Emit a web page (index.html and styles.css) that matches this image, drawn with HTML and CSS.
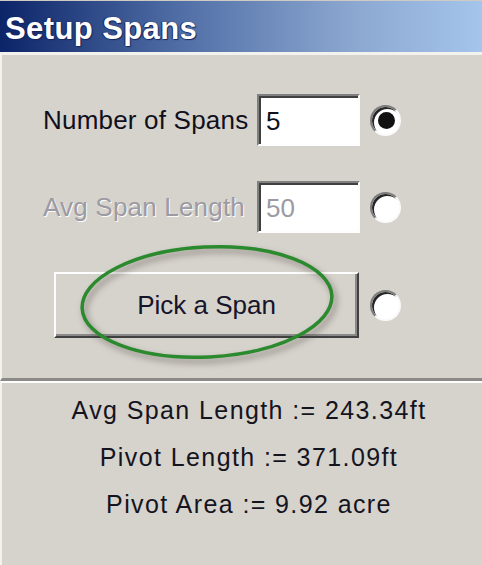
FILE: index.html
```html
<!DOCTYPE html>
<html lang="en">
<head>
    <meta charset="UTF-8">
    <meta name="viewport" content="width=device-width, initial-scale=1.0">
    <title>Setup Spans</title>
    <link rel="stylesheet" href="styles.css">
</head>
<body>
    <div class="window">
        <div class="title-bar">Setup Spans</div>

        <div class="setup-panel">
            <div class="row">
                <label class="row-label" for="spanCount">Number of Spans</label>
                <input class="field" type="text" id="spanCount" value="5">
                <span class="radio checked"></span>
            </div>
            <div class="row">
                <label class="row-label disabled" for="spanLength">Avg Span Length</label>
                <input class="field" type="text" id="spanLength" value="50" disabled>
                <span class="radio"></span>
            </div>
            <div class="row pick-row">
                <button class="pick-button">Pick a Span</button>
                <span class="radio"></span>
                <!-- highlight ring drawn over the button -->
                <svg class="highlight" width="270" height="130" viewBox="0 0 270 130">
                    <ellipse cx="135" cy="65" rx="125" ry="55" transform="rotate(-3 135 65)"
                             fill="none" stroke="#2b8a2e" stroke-width="3.5"/>
                </svg>
            </div>
        </div>

        <div class="result-panel">
            <p>Avg Span Length := 243.34ft</p>
            <p>Pivot Length := 371.09ft</p>
            <p>Pivot Area := 9.92 acre</p>
        </div>
    </div>
</body>
</html>
```

FILE: styles.css
```css
body {
    margin: 0;
    overflow: hidden;
    background-color: #d6d2cc;
    font-family: 'Liberation Sans', Arial, sans-serif;
}

.window {
    width: 496px;
    height: 565px;
    display: flex;
    flex-direction: column;
}

.title-bar {
    box-sizing: border-box;
    height: 52px;
    padding: 4px 0 0 5px;
    line-height: 48px;
    border-top: 1px solid #cfcbc4;
    background: linear-gradient(to right, #0c2468 0%, #4e6ca4 35%, #8aa6cf 70%, #a8c8ee 100%);
    color: #fff;
    font-size: 31px;
    font-weight: bold;
    letter-spacing: 0.4px;
    text-shadow: 1px 1px 1px #14245a, -1px 0 1px #14245a;
}

.setup-panel {
    padding: 39px 0 40px 41px;
    border-top: 3px solid #f3f2ef;
    border-left: 2px solid #f3f2ef;
    border-bottom: 3px solid #8c8a86;
}

.row {
    display: flex;
    align-items: center;
    margin-bottom: 35px;
}

.row:nth-child(2) {
    margin-bottom: 39px;
}

.row-label {
    width: 204px;
    margin-right: 10px;
    font-size: 26px;
    color: #10101c;
    letter-spacing: 0.2px;
    white-space: nowrap;
}

.row-label.disabled {
    color: #9c9aa2;
    text-shadow: 1px 1px 0 #fbfbfb;
}

.field {
    box-sizing: border-box;
    width: 103px;
    height: 52px;
    margin: 0;
    padding: 2px 0 0 7px;
    border: 2px solid;
    border-color: #808080 #fdfdfd #fdfdfd #808080;
    box-shadow: inset 2px 2px 0 #404040;
    background-color: #fff;
    font-family: 'Liberation Sans', Arial, sans-serif;
    font-size: 26px;
    color: #10101c;
    outline: none;
}

.field:disabled {
    color: #9c9aa2;
    background-color: #fff;
}

.radio {
    box-sizing: border-box;
    width: 31px;
    height: 31px;
    margin-left: 10px;
    border-radius: 50%;
    border: 2px solid;
    border-color: #7c7c7c #fafafa #fafafa #7c7c7c;
    box-shadow: inset 2px 2px 0 #262626;
    background-color: #fff;
    display: flex;
    justify-content: center;
    align-items: center;
}

.radio.checked::after {
    content: '';
    width: 17px;
    height: 17px;
    margin: 1px 0 0 1px;
    border-radius: 50%;
    background-color: #111;
}

.pick-row {
    position: relative;
    margin-bottom: 0;
}

.pick-button {
    box-sizing: border-box;
    width: 305px;
    height: 66px;
    margin-left: 11px;
    padding: 0;
    border: 2px solid;
    border-color: #fdfdfd #404040 #404040 #fdfdfd;
    box-shadow: inset -2px -2px 0 #8a8a8a;
    background-color: #d6d2cc;
    font-family: 'Liberation Sans', Arial, sans-serif;
    font-size: 26px;
    color: #14142a;
}

.pick-row .radio {
    margin-left: 11px;
}

.highlight {
    position: absolute;
    left: 29px;
    top: -35px;
    pointer-events: none;
    filter: drop-shadow(3px 4px 3px rgba(60, 55, 45, 0.5));
}

.result-panel {
    flex: 1;
    padding-top: 4px;
    border-top: 2px solid #fdfdfd;
    border-left: 2px solid #f3f2ef;
    text-align: center;
}

.result-panel p {
    margin: 0;
    font-size: 25px;
    line-height: 47px;
    letter-spacing: 1.4px;
    color: #14141e;
}
```
